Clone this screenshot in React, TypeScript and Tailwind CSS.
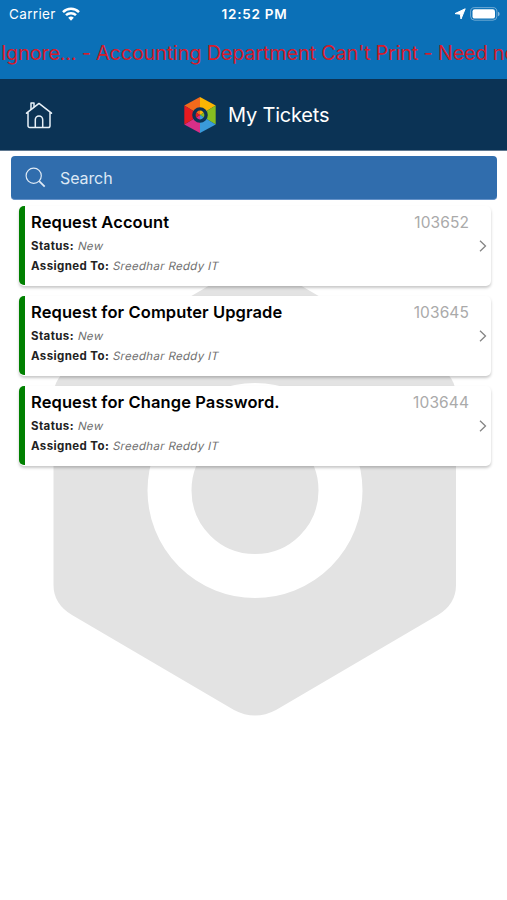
type Ticket = { id: string; title: string; status: string; assignee: string };

const tickets: Ticket[] = [
  { id: "103652", title: "Request Account", status: "New", assignee: "Sreedhar Reddy IT" },
  { id: "103645", title: "Request for Computer Upgrade", status: "New", assignee: "Sreedhar Reddy IT" },
  { id: "103644", title: "Request for Change Password.", status: "New", assignee: "Sreedhar Reddy IT" },
];

function StatusBar() {
  return (
    <div className="h-7 flex items-center text-white text-[13px] pl-[9px] pr-[7px]">
      <div className="flex-1 flex items-center gap-[6px]">
        <span className="tracking-[0.35px] text-[13.5px]">Carrier</span>
        <svg width="18" height="14" viewBox="0 0 18 14" fill="none" stroke="currentColor" strokeWidth="2.5">
          <path d="M1 5.1a11.4 11.4 0 0 1 16 0" />
          <path d="M4 8.2a7.2 7.2 0 0 1 10 0" />
          <path d="M9 13.7 6.2 10.8a4 4 0 0 1 5.6 0Z" fill="currentColor" stroke="none" />
        </svg>
      </div>
      <span className="font-semibold tracking-[0.75px] text-[13.5px]">12:52 PM</span>
      <div className="flex-1 flex items-center justify-end gap-[4px]">
        <svg width="12" height="12" viewBox="0 0 12 12" fill="currentColor">
          <path d="M11.2.8 7 11 6.3 6.2 1 5.6Z" stroke="currentColor" strokeWidth="1" strokeLinejoin="round" />
        </svg>
        <svg width="30" height="14" viewBox="0 0 30 14">
          <rect x=".6" y=".6" width="26.3" height="12.6" rx="4" fill="none" stroke="#fff" strokeOpacity=".4" />
          <rect x="2.5" y="2.2" width="22.5" height="9.4" rx="2.2" fill="#fff" />
          <path d="M28 4.8a2.3 2.3 0 0 1 0 4.4Z" fill="#fff" fillOpacity=".5" />
        </svg>
      </div>
    </div>
  );
}

function HomeIcon() {
  return (
    <svg width="28" height="28" viewBox="0 0 28 28" fill="none" stroke="#e8f1f8" strokeWidth="1.5" strokeLinecap="round" strokeLinejoin="round">
      <path d="M1.5 12.2 14 2.4l12.5 9.8M3 11.5v13.2a1.8 1.8 0 0 0 1.8 1.8h18.4a1.8 1.8 0 0 0 1.8-1.8V11.5" />
      <path d="M6 8.2V1.9h3v3.6" />
      <path d="M10.3 26.3v-7.6a3.7 3.7 0 0 1 7.4 0v7.6" />
    </svg>
  );
}

function Logo() {
  return (
    <svg width="34" height="38" viewBox="0 0 34 38">
      <path d="M17 19V1L1.3 9.6Z" fill="#f26a1b" />
      <path d="M17 19V1l15.7 8.6Z" fill="#fbb503" />
      <path d="M17 19 32.7 9.6v18.8Z" fill="#86bd20" />
      <path d="M17 19 32.7 28.4 17 37Z" fill="#3a9ada" />
      <path d="M17 19v18L1.3 28.4Z" fill="#d82f88" />
      <path d="M17 19 1.3 28.4V9.6Z" fill="#e61a20" />
      <circle cx="17" cy="19" r="6.1" fill="none" stroke="#0b3355" strokeWidth="3.4" />
    </svg>
  );
}

function Watermark() {
  return (
    <svg className="absolute left-0 top-0" width="507" height="749" viewBox="0 151 507 749">
      <path
        d="M53.5 396Q53.5 377 72 366L234 271Q255 260 276 271L438 366Q456 377 456 396V585Q456 604 438 615L276 710Q255 721 234 710L72 615Q53.5 604 53.5 585Z"
        fill="#e3e3e3"
      />
      <circle cx="255" cy="490.5" r="85.5" fill="none" stroke="#fff" strokeWidth="44" />
    </svg>
  );
}

function Field({ label, value }: { label: string; value: string }) {
  return (
    <div className="flex gap-[4px] text-[11.5px] leading-[20px] tracking-[0.4px]">
      <span className="font-bold text-[#222]">{label}</span>
      <span className="-skew-x-12 tracking-[0.3px] text-[#707070]">{value}</span>
    </div>
  );
}

function TicketCard({ t }: { t: Ticket }) {
  return (
    <div className="h-20 flex rounded-[5px] bg-white shadow-[0_2px_3px_rgba(0,0,0,0.22)]">
      <div className="w-[6px] h-[79px] shrink-0 rounded-l-[5px] bg-[#008000]" />
      <div className="flex-1 pl-[6px] pt-[4px]">
        <div className="mb-[2px] text-[16.5px] leading-[24px] tracking-[0.1px] font-semibold text-black">{t.title}</div>
        <Field label="Status:" value={t.status} />
        <Field label="Assigned To:" value={t.assignee} />
      </div>
      <div className="pt-[5px] text-[15.5px] leading-[24px] tracking-[0.1px] text-[#aaa]">{t.id}</div>
      <div className="w-[22px] flex items-center justify-end pr-[4.5px] pb-[1px]">
        <svg width="8" height="12" viewBox="0 0 8 12" fill="none" stroke="#858585" strokeWidth="1.3">
          <path d="M1 .7 6.5 6 1 11.3" />
        </svg>
      </div>
    </div>
  );
}

export default function App() {
  return (
    <div className="w-[507px] h-[900px] overflow-hidden flex flex-col bg-white font-['Inter','Liberation_Sans',sans-serif]">
      <div className="h-[79px] shrink-0 bg-[#0b70b7]">
        <StatusBar />
        <div className="pl-[1px] pt-[9px] text-[20px] leading-[32px] tracking-[-0.25px] whitespace-nowrap overflow-hidden text-[#d51b2b]">
          Ignore... - Accounting Department Can't Print - Need ne
        </div>
      </div>
      <header className="h-[72px] shrink-0 flex items-center bg-[#0b3355] border-b border-[#5f7890]">
        <div className="w-[183px] pl-[25px]">
          <HomeIcon />
        </div>
        <Logo />
        <h1 className="pl-[11px] text-[20px] tracking-[-0.2px] text-white">My Tickets</h1>
      </header>
      <main className="relative flex-1 pt-[5px]">
        <Watermark />
        <div className="relative mx-[11px] mr-[10px] h-[44px] rounded-[4px] bg-[#306dad] border-b border-[#6592c8] flex items-center pl-[14px] gap-[14px]">
          <svg width="21" height="21" viewBox="0 0 21 21" fill="none" stroke="#dfeaf5">
            <circle cx="8.7" cy="8.7" r="7.6" strokeWidth="1.2" />
            <path d="m14.2 14.2 5.5 5.5" strokeWidth="1.8" />
          </svg>
          <span className="text-[16px] tracking-[-0.1px] text-[#dce8f5]">Search</span>
        </div>
        <div className="relative flex flex-col gap-[10px] pl-[19px] pr-[16px] pt-[6px]">
          {tickets.map((t) => (
            <TicketCard key={t.id} t={t} />
          ))}
        </div>
      </main>
    </div>
  );
}
